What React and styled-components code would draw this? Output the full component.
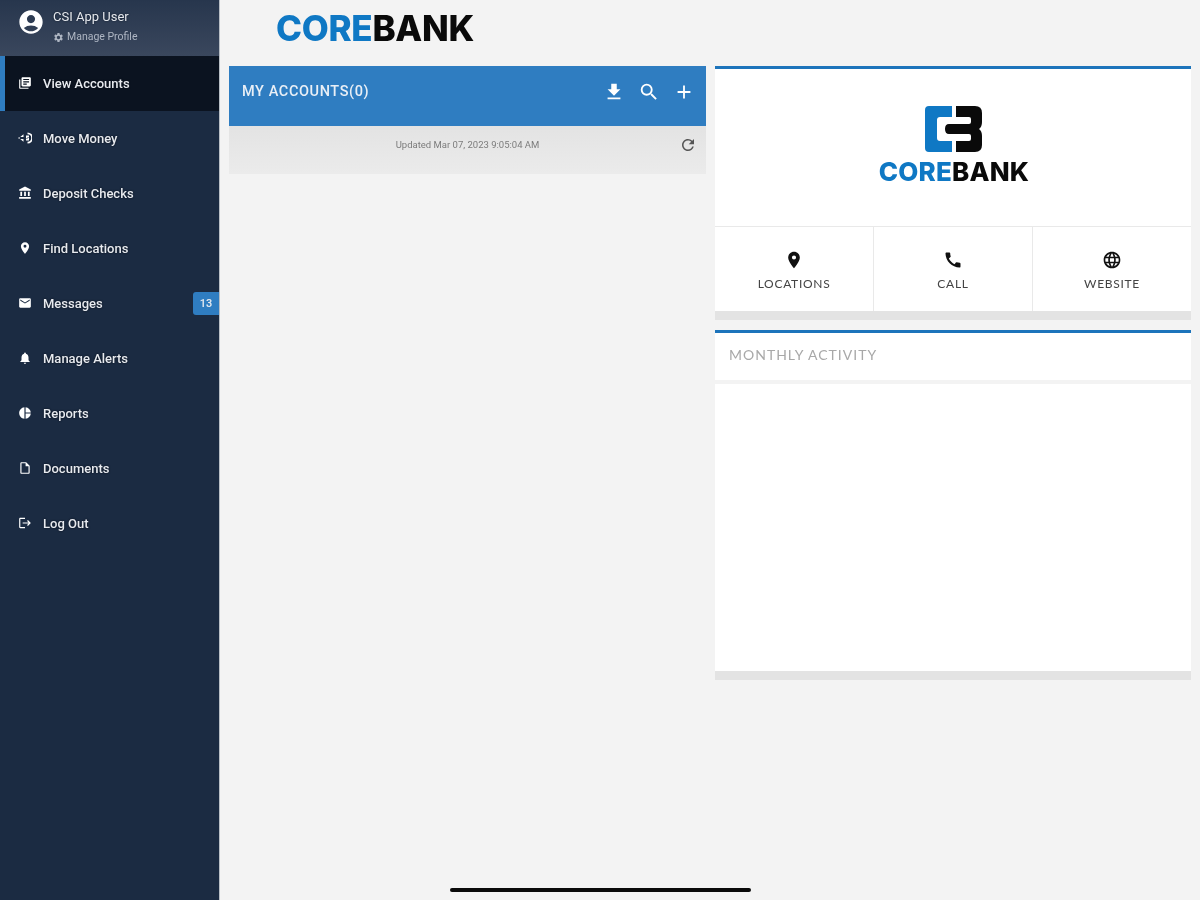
import React from "react";
import styled, { createGlobalStyle } from "styled-components";
import {
  MdLibraryBooks, MdAccountBalance, MdLocationOn, MdEmail, MdNotifications, MdPieChart,
  MdOutlineInsertDriveFile, MdLogout, MdAccountCircle, MdSettings, MdFileDownload, MdSearch,
  MdAdd, MdRefresh, MdCall, MdLanguage,
} from "react-icons/md";

const Global = createGlobalStyle`
  html, body { margin: 0; padding: 0; background: #f3f3f3; }
  * { box-sizing: border-box; }
  #root { font-family: Roboto, "Liberation Sans", sans-serif; }
`;

const Page = styled.div`
  position: relative;
  display: flex;
  width: 1200px;
  height: 900px;
  overflow: hidden;
  background: #f3f3f3;
  filter: blur(0.4px);
`;

const Sidebar = styled.aside`
  flex: 0 0 220px;
  display: flex;
  flex-direction: column;
  background: #1b2b42;
  border-right: 1px solid #b9bfc6;
`;

const Profile = styled.div`
  display: flex;
  align-items: flex-start;
  gap: 8px;
  height: 56px;
  padding: 8px 0 0 17px;
  background: linear-gradient(180deg, #27364d 0%, #3a475d 100%);
  color: #fff;
`;

const ProfileText = styled.div`
  display: flex;
  flex-direction: column;
  gap: 6px;
  margin-top: 1px;
`;

const ProfileName = styled.div`
  font-size: 13px;
  line-height: 16px;
  color: #e6e9ee;
  text-shadow: 0 0 2px #0d1726;
`;

const ProfileLink = styled.div`
  display: flex;
  align-items: center;
  gap: 3px;
  font-size: 10.5px;
  line-height: 12px;
  color: #aeb6c3;
`;

const Row = styled.div`
  display: flex;
  align-items: center;
  gap: 11px;
  height: 55px;
  padding: 0 0 1px ${(p) => (p.$active ? "13px" : "18px")};
  border-left: ${(p) => (p.$active ? "5px solid #2f7dc1" : "0")};
  background: ${(p) => (p.$active ? "#0b1320" : "transparent")};
  color: #e8ebf0;
  font-size: 13px;
  font-weight: 500;
  text-shadow: 0 0 2px #060b14;
`;

const RowIcon = styled.span`
  flex: 0 0 14px;
  min-width: 0;
  display: flex;
  justify-content: center;
  color: #fff;
`;

const Badge = styled.span`
  margin-left: auto;
  width: 26px;
  height: 23px;
  display: flex;
  align-items: center;
  justify-content: center;
  background: #2f7dc1;
  border-radius: 3px 0 0 3px;
  font-size: 11px;
  text-shadow: none;
`;

const Main = styled.main`
  flex: 1;
  padding: 11px 9px 0 9px;
`;

const TopBar = styled.div`
  height: 55px;
  padding-left: 47px;
`;

const Wordmark = styled.div`
  display: flex;
  font-family: Inter, "Liberation Sans", sans-serif;
  font-weight: 800;
  font-size: ${(p) => p.$size}px;
  line-height: ${(p) => p.$line}px;
  letter-spacing: ${(p) => p.$spacing}px;
`;

const WordBlue = styled.span`
  color: #0f78c4;
`;

const WordBlack = styled.span`
  color: #0a0a0a;
`;

const Columns = styled.div`
  display: grid;
  grid-template-columns: 477px 476px;
  gap: 9px;
  align-items: start;
`;

const AccountsHeader = styled.div`
  display: flex;
  justify-content: space-between;
  align-items: flex-start;
  height: 60px;
  padding: 15px 11px 0 13px;
  background: #2f7dc1;
  color: #fff;
`;

const AccountsTitle = styled.div`
  margin-top: 1px;
  font-size: 14.5px;
  font-weight: 500;
  line-height: 20px;
  letter-spacing: 0.6px;
  color: #e9eff6;
`;

const HeaderIcons = styled.div`
  display: flex;
  gap: 13px;
`;

const UpdatedBar = styled.div`
  display: flex;
  justify-content: center;
  position: relative;
  height: 48px;
  padding-top: 13px;
  background: linear-gradient(180deg, #e3e3e3 0%, #ebebeb 100%);
  font-size: 9.5px;
  line-height: 12px;
  color: #7c7c7c;
`;

const RefreshButton = styled.span`
  position: absolute;
  right: 9px;
  top: 10px;
  color: #555;
  display: flex;
`;

const Card = styled.section`
  background: #fff;
  border-top: 3px solid #1d74bb;
  border-bottom: 9px solid #e3e3e3;
  & + & {
    margin-top: 10px;
  }
`;

const LogoArea = styled.div`
  display: flex;
  flex-direction: column;
  align-items: center;
  gap: 7px;
  height: 157px;
  padding: 37px 0 0 2px;
`;

const Tiles = styled.div`
  display: grid;
  grid-template-columns: 158px 159px 159px;
  height: 85px;
  border-top: 1px solid #e9e9e9;
`;

const Tile = styled.div`
  display: flex;
  flex-direction: column;
  align-items: center;
  padding-top: 23px;
  color: #111;
  & + & {
    border-left: 1px solid #e9e9e9;
  }
`;

const TileLabel = styled.div`
  margin-top: 7px;
  font-family: Lato, "Liberation Sans", sans-serif;
  font-size: 12px;
  line-height: 14px;
  letter-spacing: 0.7px;
  color: #444;
`;

const ActivityHeading = styled.div`
  height: 51px;
  padding: 13px 14px 0;
  border-bottom: 4px solid #f3f3f3;
  font-family: Lato, "Liberation Sans", sans-serif;
  font-size: 14px;
  line-height: 18px;
  letter-spacing: 1px;
  color: #a8a8a8;
`;

const ActivityBody = styled.div`
  height: 287px;
`;

const HomeIndicator = styled.div`
  position: absolute;
  left: 450px;
  top: 888px;
  width: 301px;
  height: 4px;
  border-radius: 2px;
  background: #0a0a0a;
`;

const MoveMoneyIcon = () => (
  <svg width="14" height="14" viewBox="0 0 14 14" fill="currentColor">
    <path d="M5.5 3.2 V6 H1.5 L0 7 L1.5 8 H5.5 V10.8 L1 7 Z" />
    <path d="M9.5 1.5 a5 5 0 0 1 0 11 v-1.8 a3.2 3.2 0 0 0 0-7.4 Z" />
    <path d="M8 4.5 h3 v1.4 H9.2 v.5 h1.8 v3 h-3 V8.1 h1.8 v-.5 H8 Z" />
  </svg>
);

const LogoMark = () => (
  <svg width="58" height="46" viewBox="0 0 58 46">
    <path fill="#0f78c4" d="M4 0H27V11H15Q12 11 12 14V32Q12 35 15 35H27V46H4Q0 46 0 42V4Q0 0 4 0Z" />
    <path fill="#0a0a0a" d="M31 0H50Q57 0 57 7V16Q57 21 54 23Q57 25 57 30V39Q57 46 50 46H31V35H44Q46 35 46 33V30Q46 28 44 28H24Q20 28 20 23Q20 18 24 18H44Q46 18 46 16V13Q46 11 44 11H31Z" />
  </svg>
);

const menu = [
  { label: "View Accounts", icon: <MdLibraryBooks size={14} />, active: true },
  { label: "Move Money", icon: <MoveMoneyIcon /> },
  { label: "Deposit Checks", icon: <MdAccountBalance size={14} /> },
  { label: "Find Locations", icon: <MdLocationOn size={14} /> },
  { label: "Messages", icon: <MdEmail size={14} />, badge: "13" },
  { label: "Manage Alerts", icon: <MdNotifications size={14} /> },
  { label: "Reports", icon: <MdPieChart size={14} /> },
  { label: "Documents", icon: <MdOutlineInsertDriveFile size={14} /> },
  { label: "Log Out", icon: <MdLogout size={14} /> },
];

const tiles = [
  { label: "LOCATIONS", icon: <MdLocationOn size={20} /> },
  { label: "CALL", icon: <MdCall size={20} /> },
  { label: "WEBSITE", icon: <MdLanguage size={20} /> },
];

export default function App() {
  return (
    <Page>
      <Global />
      <Sidebar>
        <Profile>
          <MdAccountCircle size={28} />
          <ProfileText>
            <ProfileName>CSI App User</ProfileName>
            <ProfileLink>
              <MdSettings size={11} />
              Manage Profile
            </ProfileLink>
          </ProfileText>
        </Profile>
        {menu.map((m) => (
          <Row key={m.label} $active={m.active}>
            <RowIcon>{m.icon}</RowIcon>
            {m.label}
            {m.badge && <Badge>{m.badge}</Badge>}
          </Row>
        ))}
      </Sidebar>
      <Main>
        <TopBar>
          <Wordmark $size={35} $line={34} $spacing={-0.3}>
            <WordBlue>CORE</WordBlue>
            <WordBlack>BANK</WordBlack>
          </Wordmark>
        </TopBar>
        <Columns>
          <div>
            <AccountsHeader>
              <AccountsTitle>MY ACCOUNTS(0)</AccountsTitle>
              <HeaderIcons>
                <MdFileDownload size={22} />
                <MdSearch size={22} />
                <MdAdd size={22} />
              </HeaderIcons>
            </AccountsHeader>
            <UpdatedBar>
              Updated Mar 07, 2023 9:05:04 AM
              <RefreshButton>
                <MdRefresh size={18} />
              </RefreshButton>
            </UpdatedBar>
          </div>
          <div>
            <Card>
              <LogoArea>
                <LogoMark />
                <Wordmark $size={26} $line={26} $spacing={0.2}>
                  <WordBlue>CORE</WordBlue>
                  <WordBlack>BANK</WordBlack>
                </Wordmark>
              </LogoArea>
              <Tiles>
                {tiles.map((t) => (
                  <Tile key={t.label}>
                    {t.icon}
                    <TileLabel>{t.label}</TileLabel>
                  </Tile>
                ))}
              </Tiles>
            </Card>
            <Card>
              <ActivityHeading>MONTHLY ACTIVITY</ActivityHeading>
              <ActivityBody />
            </Card>
          </div>
        </Columns>
      </Main>
      <HomeIndicator />
    </Page>
  );
}
